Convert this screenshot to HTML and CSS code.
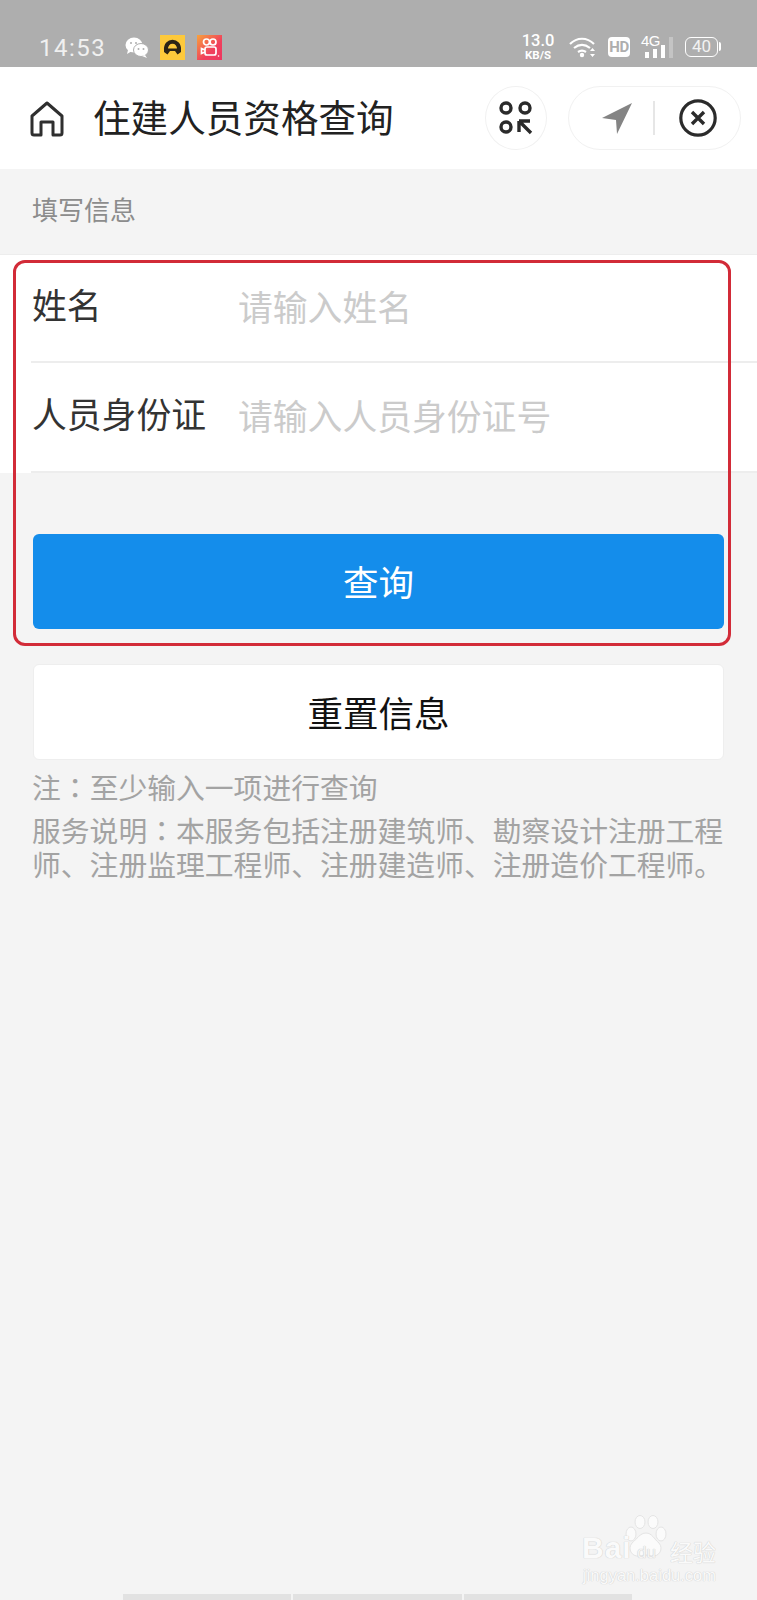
FILE: index.html
```html
<!DOCTYPE html>
<html lang="zh-CN">
<head>
    <meta charset="UTF-8">
    <meta name="viewport" content="width=device-width, initial-scale=1.0">
    <title>住建人员资格查询</title>
    <link rel="stylesheet" href="styles.css">
</head>
<body>
    <div class="status-bar">
        <span class="time">14:53</span>
        <svg class="ic-wechat" width="24" height="21" viewBox="0 0 24 21">
            <ellipse cx="9" cy="8" rx="8.500" ry="7.500" fill="#fff"/>
            <path d="M3 13l-1 4 5-3z" fill="#fff"/>
            <ellipse cx="16" cy="13" rx="7.500" ry="6.500" fill="#fff" stroke="#aeaeae" stroke-width="1"/>
            <path d="M20 18l2 3-5-2z" fill="#fff"/>
            <circle cx="6" cy="6" r="1" fill="#aeaeae"/><circle cx="11" cy="6" r="1" fill="#aeaeae"/>
            <circle cx="13.500" cy="12" r="1" fill="#aeaeae"/><circle cx="18.500" cy="12" r="1" fill="#aeaeae"/>
        </svg>
        <svg class="ic-app" width="25" height="25" viewBox="0 0 25 25">
            <rect width="25" height="25" fill="#fdc93b"/>
            <path d="M6 15c-1-11 14-11 13 0" fill="none" stroke="#2c2416" stroke-width="4"/>
            <path d="M4 13.500h17v3.500l-3.500 2.500-2.500-3.500h-5l-2.500 3.500-3.500-2.500z" fill="#2c2416"/>
        </svg>
        <svg class="ic-app" width="25" height="25" viewBox="0 0 25 25">
            <defs>
                <linearGradient id="kw" x1="0" y1="0" x2="1" y2="1">
                    <stop offset="0" stop-color="#f8a33c"/>
                    <stop offset="0.6" stop-color="#f0405c"/>
                    <stop offset="1" stop-color="#ee3560"/>
                </linearGradient>
            </defs>
            <rect width="25" height="25" fill="url(#kw)"/>
            <g fill="none" stroke="#fff" stroke-width="1.700">
                <circle cx="9.500" cy="7" r="3"/><circle cx="16" cy="7" r="3"/>
                <rect x="8" y="12" width="11" height="8" rx="2"/>
                <path d="M8 15l-3.500-1.500v5L8 17"/>
            </g>
            <circle cx="21.500" cy="21" r="0.800" fill="#fff"/>
        </svg>
        <div class="status-right">
            <div class="speed"><b>13.0</b><small>KB/S</small></div>
            <svg width="28" height="22" viewBox="0 0 28 22">
                <g fill="none" stroke="#fff" stroke-width="2.200">
                    <path d="M1 8c7-7 17-7 24 0"/><path d="M5 12c5-4 11-4 16 0"/><path d="M9 16c3-2 5-2 8 0"/>
                </g>
                <circle cx="13" cy="19" r="2.200" fill="#fff"/>
                <path d="M23.500 12l2.500 3h-5zM23.500 21l2.500-3h-5z" fill="#fff"/>
            </svg>
            <span class="hd">HD</span>
            <div class="signal">
                <span class="net">4G</span>
                <i class="b1"></i><i class="b2"></i><i class="b3"></i><i class="b4"></i>
            </div>
            <div class="battery">40</div>
        </div>
    </div>

    <div class="top-bar">
        <svg class="home" width="34" height="36" viewBox="0 0 34 36">
            <path d="M2 15L17 2l15 13v17a2 2 0 0 1-2 2h-7V21H11v13H4a2 2 0 0 1-2-2z" fill="none" stroke="#2f2f2f" stroke-width="3" stroke-linejoin="round"/>
        </svg>
        <h1>住建人员资格查询</h1>
        <div class="round-btn">
            <svg width="34" height="34" viewBox="0 0 34 34">
                <g fill="none" stroke="#2b2b2b" stroke-width="3.400">
                    <circle cx="7" cy="7" r="5"/><circle cx="26" cy="7" r="5"/><circle cx="7" cy="26" r="5"/>
                </g>
                <path d="M20 20h11M20 20v11M20 20l12 12" fill="none" stroke="#2b2b2b" stroke-width="3.400"/>
            </svg>
        </div>
        <div class="capsule">
            <svg class="nav" width="30" height="31" viewBox="0 0 30 31">
                <path d="M30 0L0 15l14 2 1 14z" fill="#848484"/>
            </svg>
            <span class="cap-line"></span>
            <svg class="close" width="38" height="38" viewBox="0 0 38 38">
                <circle cx="19" cy="19" r="17.200" fill="none" stroke="#2b2b2b" stroke-width="3.200"/>
                <path d="M13 13l12 12M25 13L13 25" stroke="#2b2b2b" stroke-width="3.400"/>
            </svg>
        </div>
    </div>

    <div class="section-title">填写信息</div>

    <div class="form">
        <div class="row">
            <label>姓名</label>
            <span class="placeholder">请输入姓名</span>
        </div>
        <div class="row">
            <label>人员身份证</label>
            <span class="placeholder">请输入人员身份证号</span>
        </div>
    </div>

    <div class="actions">
        <div class="btn btn-primary">查询</div>
        <div class="btn btn-reset">重置信息</div>
    </div>

    <div class="notes">
        <p class="note-first">注<span class="colon" lang="zh-Hant">：</span>至少输入一项进行查询</p>
        <p>服务说明<span class="colon" lang="zh-Hant">：</span>本服务包括注册建筑师、勘察设计注册工程师、注册监理工程师、注册建造师、注册造价工程师。</p>
    </div>

    <div class="red-frame"></div>

    <div class="watermark">
        <svg class="paw" width="42" height="44" viewBox="0 0 42 44">
            <g fill="#fbfbfb" stroke="#e4e4e4" stroke-width="1">
                <ellipse cx="6" cy="19" rx="5" ry="7"/>
                <ellipse cx="15" cy="7" rx="5" ry="6.500"/>
                <ellipse cx="28" cy="7" rx="5" ry="6.500"/>
                <ellipse cx="36" cy="19" rx="5" ry="7"/>
                <path d="M21 18c6 0 8 6 13 10 5 6 0 14-7 13-3 0-4-1-6-1s-4 1-7 1c-7 1-12-7-7-13 5-4 8-10 14-10z"/>
            </g>
        </svg>
        <span class="wm-bai">Bai</span>
        <span class="wm-du">du</span>
        <span class="wm-jy">经验</span>
        <span class="wm-url">jingyan.baidu.com</span>
    </div>

    <div class="home-bar">
        <span></span><span></span><span></span>
    </div>
</body>
</html>
```

FILE: styles.css
```css
* {
    box-sizing: border-box;
}
html, body {
    margin: 0;
    padding: 0;
}
body {
    position: relative;
    width: 757px;
    height: 1600px;
    overflow: hidden;
    background: #f4f4f4;
    font-family: "Noto Sans CJK SC", "Noto Sans", sans-serif;
}

/* status bar */
.status-bar {
    display: flex;
    align-items: center;
    height: 67px;
    padding: 27px 0 0 39px;
    background: #aeaeae;
    color: #fff;
}
.time {
    width: 86px;
    margin-top: 2px;
    font: 24px Roboto, sans-serif;
    letter-spacing: 1.500px;
    color: #f0f0f0;
}
.ic-wechat {
    margin-right: 11px;
}
.ic-app {
    margin-right: 12px;
}
.status-right {
    display: flex;
    align-items: center;
    margin-left: auto;
    padding-right: 37px;
}
.speed {
    display: flex;
    flex-direction: column;
    align-items: center;
    width: 34px;
    margin-right: 14px;
    font-family: Roboto, sans-serif;
}
.speed b {
    font-size: 16.500px;
    font-weight: 500;
    line-height: 16px;
}
.speed small {
    font-size: 11.500px;
    font-weight: 700;
    line-height: 12px;
}
.hd {
    width: 22px;
    height: 20px;
    margin: 0 11px;
    border-radius: 4px;
    background: #fff;
    color: #aeaeae;
    font: 700 15px/20px Roboto, sans-serif;
    text-align: center;
    letter-spacing: -0.5px;
}
.signal {
    position: relative;
    display: flex;
    align-items: flex-end;
    gap: 4px;
    width: 32px;
    height: 22px;
    padding-left: 4px;
    margin-right: 12px;
}
.net {
    position: absolute;
    top: -2px;
    left: 0;
    font: 15px/14px "Liberation Sans", sans-serif;
    letter-spacing: -0.5px;
}
.signal i {
    display: block;
    width: 4px;
    background: #fff;
}
.signal .b1 { height: 6px; }
.signal .b2 { height: 9px; }
.signal .b3 { height: 13px; }
.signal .b4 { height: 21px; background: #c4c4c4; }
.battery {
    position: relative;
    width: 33px;
    height: 20px;
    margin-right: 2px;
    border: 1.500px solid #fff;
    border-radius: 6px;
    color: #f2f2f2;
    font: 17px/17px Roboto, sans-serif;
    text-align: center;
}
.battery::after {
    content: "";
    position: absolute;
    top: 4px;
    right: -4px;
    width: 2px;
    height: 9px;
    border-radius: 0 2px 2px 0;
    background: #fff;
}

/* title bar */
.top-bar {
    display: flex;
    align-items: center;
    height: 102px;
    padding-left: 30px;
    background: #fff;
}
.home {
    margin-top: 2px;
}
.top-bar h1 {
    width: 391px;
    margin: 0 0 5px 29px;
    font-size: 37.600px;
    font-weight: 400;
    line-height: 50px;
    color: #222;
}
.round-btn {
    display: flex;
    align-items: center;
    justify-content: center;
    width: 62px;
    height: 64px;
    margin-left: 1px;
    border: 1px solid #f1f1f1;
    border-radius: 50%;
}
.capsule {
    display: flex;
    align-items: center;
    width: 173px;
    height: 64px;
    margin-left: 21px;
    padding-left: 33px;
    border: 1px solid #f1f1f1;
    border-radius: 32px;
}
.cap-line {
    width: 2px;
    height: 34px;
    margin: 0 24px 0 21px;
    background: #e6e6e6;
}

/* form */
.section-title {
    height: 85px;
    padding-top: 20px;
    font-size: 26px;
    line-height: 40px;
    padding-left: 32px;
    color: #8c8c8c;
}
.form {
    padding-left: 31px;
    background: #fff;
    border-top: 1px solid #ededed;
}
.row {
    display: flex;
    align-items: center;
    height: 108px;
    border-bottom: 2px solid #ededed;
}
.row + .row {
    height: 110px;
}
.row label {
    width: 207px;
    padding-left: 1px;
    font-size: 34.800px;
    line-height: 48px;
    color: #333;
    margin-bottom: 9px;
}
.row .placeholder {
    font-size: 34.800px;
    line-height: 48px;
    color: #cbcbcb;
    margin-bottom: 5px;
}

.actions {
    padding: 61px 33px 0;
}
.btn {
    height: 95px;
    border-radius: 6px;
    font-size: 35.500px;
    line-height: 93px;
    text-align: center;
}
.btn-primary {
    background: #148deb;
    color: #fff;
}
.btn-reset {
    height: 96px;
    margin-top: 35px;
    background: #fff;
    border: 1px solid #eeeeee;
    color: #111;
    line-height: 94px;
}
.notes {
    padding: 10px 30px 0 32px;
    font-size: 28.800px;
    line-height: 34px;
    color: #a3a3a3;
}
.notes p {
    margin: 0;
}
.notes .note-first {
    margin-bottom: 9px;
}
.colon {
    display: inline-block;
    font-family: "Noto Sans CJK TC", sans-serif;
    line-height: 1;
}

/* annotation over the screenshot */
.red-frame {
    position: absolute;
    top: 260px;
    left: 13px;
    width: 718px;
    height: 386px;
    border: 3px solid #d22b38;
    border-radius: 12px;
}

/* baidu watermark */
.watermark {
    position: absolute;
    top: 1515px;
    left: 580px;
    width: 140px;
    height: 70px;
    color: #fafafa;
    text-shadow: 0 0 1px #cfcfcf, 0 0 1px #cfcfcf;
}
.watermark span {
    position: absolute;
    font-family: "Liberation Sans", sans-serif;
    white-space: nowrap;
}
.paw {
    position: absolute;
    top: 0;
    left: 45px;
}
.wm-bai {
    top: 14px;
    left: 2px;
    font-size: 30px;
    font-weight: 700;
    line-height: 38px;
    letter-spacing: 1px;
}
.wm-du {
    top: 28px;
    left: 57px;
    font-size: 17px;
    line-height: 20px;
    color: #f4f4f4;
}
.watermark .wm-jy {
    top: 21px;
    left: 90px;
    font-family: "Noto Sans CJK SC", sans-serif;
    font-size: 23px;
    line-height: 30px;
}
.wm-url {
    top: 50px;
    left: 3px;
    font-size: 16.500px;
    line-height: 20px;
}

/* gesture bar at the bottom edge */
.home-bar {
    position: absolute;
    left: 123px;
    bottom: 0;
    display: flex;
    gap: 2px;
    width: 509px;
    height: 6px;
}
.home-bar span {
    flex: 1;
    background: #e2e2e2;
}
```
